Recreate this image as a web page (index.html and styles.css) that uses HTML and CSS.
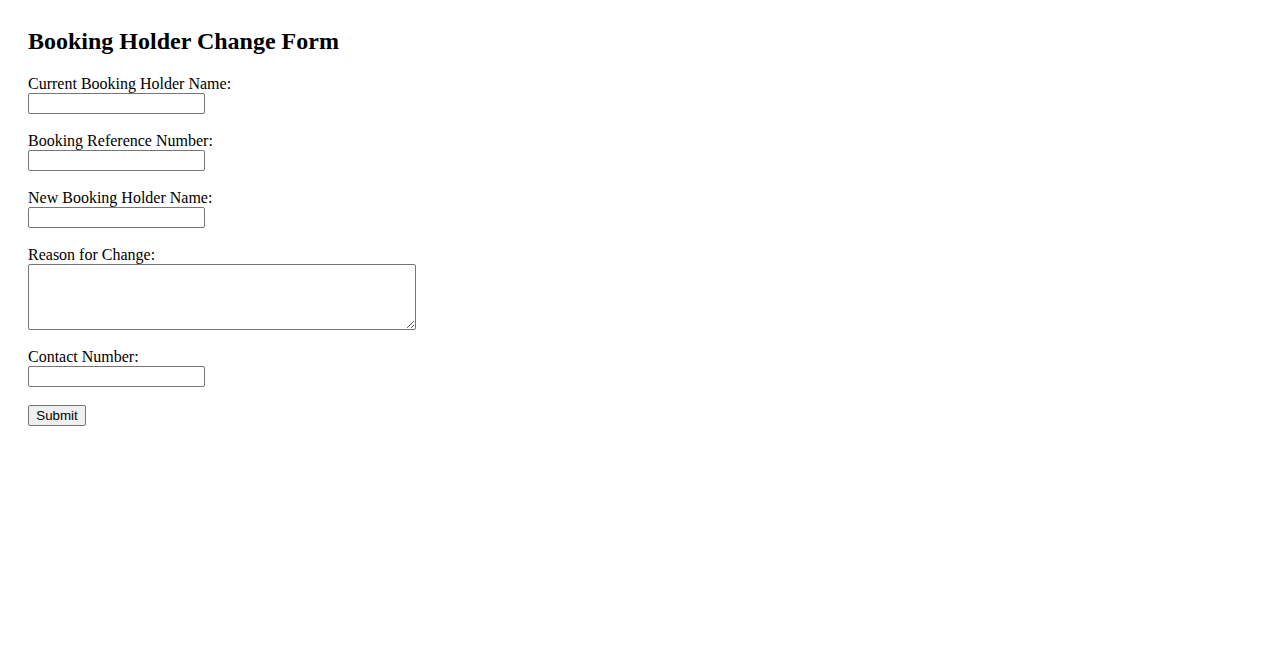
FILE: index.html
```html
<!DOCTYPE html>
<html>
<head>
<meta charset="utf-8">
<title>Booking Holder Change Form</title>
<link rel="stylesheet" href="styles.css">
</head>
<body>
<form class="form">
  <h2 class="title">Booking Holder Change Form</h2>
  <div class="field">
    <label class="label" for="current">Current Booking Holder Name:</label>
    <input class="input" type="text" id="current">
  </div>
  <div class="field">
    <label class="label" for="ref">Booking Reference Number:</label>
    <input class="input" type="text" id="ref">
  </div>
  <div class="field">
    <label class="label" for="new">New Booking Holder Name:</label>
    <input class="input" type="text" id="new">
  </div>
  <div class="field">
    <label class="label" for="reason">Reason for Change:</label>
    <textarea class="textarea" id="reason"></textarea>
  </div>
  <div class="field">
    <label class="label" for="contact">Contact Number:</label>
    <input class="input" type="text" id="contact">
  </div>
  <div class="actions">
    <button class="button" type="submit">Submit</button>
  </div>
</form>
</body>
</html>
```
FILE: styles.css
```css
html, body {
  background: #ffffff;
}
body {
  margin: 0;
  padding: 28px;
  font-family: "Liberation Serif", "Times New Roman", serif;
  font-size: 16px;
  color: #000;
}
.form {
  display: flex;
  flex-direction: column;
  align-items: flex-start;
}
.title {
  margin: 0 0 21px;
  font-size: 24px;
  font-weight: bold;
  line-height: 26px;
}
.field {
  display: flex;
  flex-direction: column;
  align-items: flex-start;
  margin-bottom: 18px;
}
.label {
  display: block;
  line-height: 18px;
}
.input {
  box-sizing: border-box;
  width: 177px;
  height: 21px;
  margin: 0;
  padding: 1px 2px;
  border: 1px solid #767676;
  border-radius: 2px;
  background: #fff;
  font-family: "Liberation Sans", Arial, sans-serif;
  font-size: 13.33px;
}
.textarea {
  box-sizing: border-box;
  width: 388px;
  height: 66px;
  margin: 0;
  padding: 2px;
  border: 1px solid #767676;
  border-radius: 2px;
  background: #fff;
  font-family: "Liberation Mono", monospace;
  font-size: 13.33px;
}
.button {
  box-sizing: border-box;
  width: 58px;
  height: 21px;
  margin: 0;
  padding: 1px 6px;
  border: 1px solid #767676;
  border-radius: 2px;
  background: #efefef;
  color: #000;
  font-family: "Liberation Sans", Arial, sans-serif;
  font-size: 13.33px;
  line-height: 17px;
}
```
